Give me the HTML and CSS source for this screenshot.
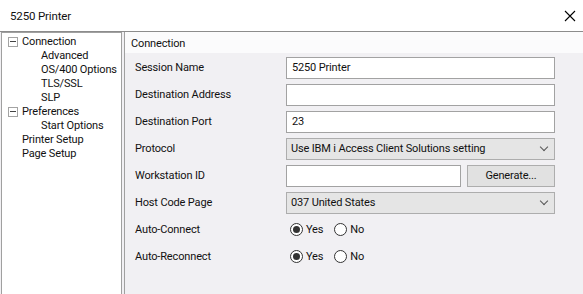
FILE: index.html
```html
<!DOCTYPE html>
<html lang="en">
<head>
    <meta charset="UTF-8">
    <title>5250 Printer</title>
    <link rel="stylesheet" href="styles.css">
</head>
<body>
    <div class="window">
        <header class="titlebar">
            <span class="title">5250 Printer</span>
            <span class="close">
                <svg width="12" height="12" viewBox="0 0 12 12"><path d="M1 1 L11 11 M11 1 L1 11" stroke="#000" stroke-width="1.1" fill="none"/></svg>
            </span>
        </header>

        <div class="main">
            <!-- arvore de categorias -->
            <ul class="tree">
                <li class="node"><span class="toggle"></span>Connection</li>
                <li class="leaf">Advanced</li>
                <li class="leaf">OS/400 Options</li>
                <li class="leaf">TLS/SSL</li>
                <li class="leaf">SLP</li>
                <li class="node"><span class="toggle"></span>Preferences</li>
                <li class="leaf">Start Options</li>
                <li class="top">Printer Setup</li>
                <li class="top">Page Setup</li>
            </ul>

            <section class="panel">
                <div class="panel-head">Connection</div>
                <div class="form">
                    <label>Session Name</label>
                    <div class="field"><div class="textbox">5250 Printer</div></div>

                    <label>Destination Address</label>
                    <div class="field"><div class="textbox"></div></div>

                    <label>Destination Port</label>
                    <div class="field"><div class="textbox">23</div></div>

                    <label>Protocol</label>
                    <div class="field"><div class="combo">Use IBM i Access Client Solutions setting<span class="chev"></span></div></div>

                    <label>Workstation ID</label>
                    <div class="field split">
                        <div class="textbox short"></div>
                        <button class="btn">Generate...</button>
                    </div>

                    <label>Host Code Page</label>
                    <div class="field"><div class="combo">037 United States<span class="chev"></span></div></div>

                    <label>Auto-Connect</label>
                    <div class="field radios">
                        <span class="radio checked"></span><span class="opt">Yes</span>
                        <span class="radio"></span><span class="opt">No</span>
                    </div>

                    <label>Auto-Reconnect</label>
                    <div class="field radios">
                        <span class="radio checked"></span><span class="opt">Yes</span>
                        <span class="radio"></span><span class="opt">No</span>
                    </div>
                </div>
            </section>
        </div>
    </div>
</body>
</html>
```

FILE: styles.css
```css
* {
    margin: 0;
    padding: 0;
    box-sizing: border-box;
}

body {
    font-family: 'Roboto', 'Liberation Sans', sans-serif;
    font-size: 11px;
    letter-spacing: -0.15px;
    color: #111;
    background: #f1f0f3;
    width: 583px;
    height: 294px;
    overflow: hidden;
}

.window {
    height: 100%;
    display: flex;
    flex-direction: column;
}

.titlebar {
    height: 32px;
    flex-shrink: 0;
    background: #fff;
    border-bottom: 1px solid #8c8c8c;
    display: flex;
    align-items: center;
    justify-content: space-between;
    padding: 0 6px 0 10px;
    font-size: 11.5px;
}

.close {
    display: flex;
    width: 14px;
    justify-content: center;
}

.main {
    flex: 1;
    display: flex;
    gap: 2px;
    padding-left: 1px;
}

/* arvore */
.tree {
    list-style: none;
    width: 121px;
    background: #fff;
    border: 1px solid #a0a0a0;
    border-bottom: none;
    padding-top: 2px;
}

.tree li {
    height: 14px;
    line-height: 14px;
    white-space: nowrap;
}

.tree .node,
.tree .top {
    padding-left: 20px;
    position: relative;
}

.tree .leaf {
    padding-left: 39px;
}

.toggle {
    position: absolute;
    left: 6px;
    top: 2px;
    width: 10px;
    height: 10px;
    border: 1px solid #a3a3a3;
    background: #fff;
}

.toggle::after {
    content: "";
    position: absolute;
    left: 1px;
    top: 3px;
    width: 6px;
    height: 1px;
    background: #444;
}

/* painel direito */
.panel {
    flex: 1;
    border-left: 1px solid #a0a0a0;
    display: flex;
    flex-direction: column;
}

.panel-head {
    height: 21px;
    line-height: 24px;
    padding-left: 6px;
    background: #fbfbfc;
}

.form {
    display: grid;
    grid-template-columns: 151px 269px;
    grid-auto-rows: 27px;
    align-items: center;
    padding: 1px 0 0 10px;
}

.field {
    height: 22px;
    display: flex;
    align-items: center;
}

.textbox {
    width: 100%;
    height: 22px;
    line-height: 20px;
    padding-left: 5px;
    background: #fff;
    border: 1px solid #a2a2a2;
}

.textbox.short {
    width: 175px;
}

.split {
    justify-content: space-between;
}

.btn {
    width: 88px;
    height: 22px;
    font: inherit;
    letter-spacing: inherit;
    color: inherit;
    background: #e1e1e1;
    border: 1px solid #adadad;
}

.combo {
    position: relative;
    width: 100%;
    height: 22px;
    line-height: 20px;
    padding-left: 4px;
    background: #e5e5e5;
    border: 1px solid #adadad;
}

.chev {
    position: absolute;
    right: 7px;
    top: 5px;
    width: 6px;
    height: 6px;
    border-right: 1px solid #555;
    border-bottom: 1px solid #555;
    transform: rotate(45deg);
}

.radios {
    padding-left: 4px;
}

.radio {
    width: 13px;
    height: 13px;
    border-radius: 50%;
    border: 1px solid #333;
    background: #fff;
    position: relative;
    margin-right: 3px;
}

.radio.checked::after {
    content: "";
    position: absolute;
    left: 2px;
    top: 2px;
    width: 7px;
    height: 7px;
    border-radius: 50%;
    background: #333;
}

.opt {
    margin-right: 11px;
}
```
